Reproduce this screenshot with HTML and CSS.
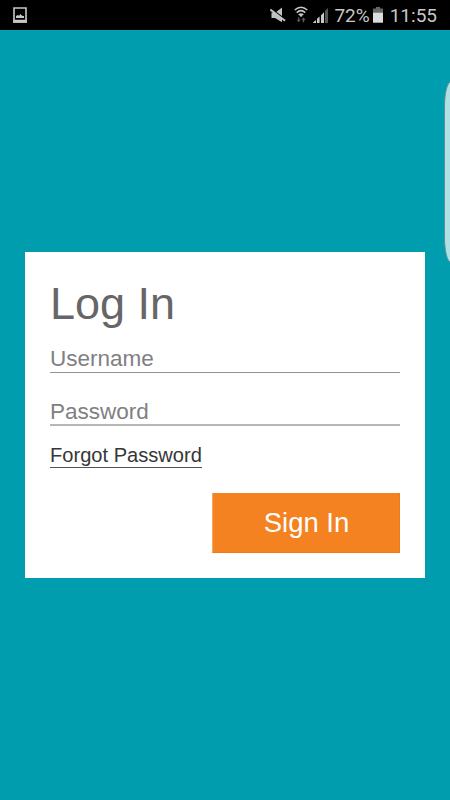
FILE: index.html
```html
<!DOCTYPE html>
<html lang="en">
  <head>
    <meta charset="UTF-8" />
    <meta name="viewport" content="width=device-width, initial-scale=1.0" />
    <title>Log In</title>
    <link rel="stylesheet" href="styles.css">
  </head>
  <body>
    <header class="status-bar">
      <svg class="icon-picture" width="14" height="16" viewBox="0 0 14 16">
        <path d="M1 1h12v14H1z" fill="none" stroke="#c8c8c8" stroke-width="1.6" />
        <path d="M.2 12.8h13.6v2.9H.2zM3 11V9l2-1 1 .7 1.5-1.7 1.5 1.7L11 9v2z" fill="#c8c8c8" />
      </svg>
      <div class="status-icons">
        <svg class="icon-mute" width="16" height="16" viewBox="0 0 16 16">
          <path d="M1.5 5.5h4L12 .5v14.8L5 11H1.5z" fill="#c0c0c0" />
          <path d="M0 1.2l16 11.8" stroke="#000" stroke-width="1.6" />
          <path d="M.3 2.5l14.7 11.3" stroke="#c4c4c4" stroke-width="2" />
        </svg>
        <svg class="icon-wifi" width="14" height="17" viewBox="0 0 14 17">
          <path d="M.7 4Q7-1.6 13.3 4M2.7 6.6Q7 2.7 11.3 6.6M4.7 9Q7 7 9.3 9" fill="none" stroke="#c8c8c8" stroke-width="1.5" />
          <circle cx="7" cy="9.6" r="1.2" fill="#c8c8c8" />
          <path d="M4 11.5h1.4v2.3h1.3L4.7 16.3l-2-2.5H4zM8.8 16.3V14H7.4l2.1-2.5 2.1 2.5h-1.4v2.3z" fill="#5c5c5c" />
        </svg>
        <svg class="icon-signal" width="15" height="15" viewBox="0 0 15 15">
          <path d="M0 15v-.5l3-2.5v3zM4 15v-4.2l2.6-2.4V15zM8 15V7.2l3-2.9V15z" fill="#c8c8c8" />
          <path d="M12 15V3l3-3v15z" fill="#555" />
        </svg>
        <span class="battery-level">72%</span>
        <svg class="icon-battery" width="10" height="16" viewBox="0 0 10 16">
          <path d="M0 1.5h3V0h4v1.5h3V6H0z" fill="#666" />
          <path d="M0 5.7h10v10H0z" fill="#dcdcdc" />
        </svg>
        <span class="clock">11:55</span>
      </div>
    </header>
    <div class="edge-handle"></div>
    <main class="container">
      <form class="login-form" id="loginForm">
        <h1>Log In</h1>
        <input type="text" id="username" placeholder="Username" />
        <input type="password" id="password" placeholder="Password" />
        <a class="forgot" href="#">Forgot Password</a>
        <input type="submit" value="Sign In" />
      </form>
    </main>
  </body>
</html>
```

FILE: styles.css
```css
* {
  box-sizing: border-box;
}

body {
  margin: 0;
  height: 100vh;
  display: flex;
  flex-direction: column;
  overflow: hidden;
  background-color: #009dae;
  font-family: "Liberation Sans", Arial, sans-serif;
}

.status-bar {
  display: flex;
  flex: none;
  justify-content: space-between;
  height: 30px;
  padding: 0 13px;
  background-color: #000;
  color: #c8c8c8;
  font-family: Roboto, sans-serif;
  font-size: 19px;
  line-height: 32px;
}

.status-icons {
  display: flex;
}

.icon-picture {
  margin-top: 7px;
}

.icon-mute {
  margin: 7px 8px 0 0;
}

.icon-wifi {
  margin: 6px 5px 0 0;
}

.icon-signal {
  margin: 8px 6px 0 0;
}

.icon-battery {
  margin: 7px 7px 0 3px;
}

.edge-handle {
  position: absolute;
  top: 81px;
  right: -1px;
  width: 7px;
  height: 182px;
  border: 1px solid #5e8f95;
  border-right: none;
  border-radius: 7px 0 0 7px / 26px 0 0 26px;
  background-color: #aee0e5;
}

.container {
  flex: 1;
  display: flex;
  align-items: center;
  padding: 0 25px;
}

.login-form {
  display: flex;
  flex-direction: column;
  width: 100%;
  height: 326px;
  padding: 26px 25px 25px;
  background-color: #fff;
}

h1 {
  margin: 0 0 13px;
  color: #666668;
  font-size: 45px;
  font-weight: normal;
  line-height: 52px;
}

input[type='text'],
input[type='password'] {
  width: 100%;
  height: 30px;
  margin: 0 0 23px;
  padding: 2px 0 0;
  border: none;
  border-bottom: 1px solid #929292;
  border-radius: 0;
  background: none;
  font-family: inherit;
  font-size: 22.5px;
}

input[type='password'] {
  margin-bottom: 17px;
  padding-top: 3px;
  border-bottom: 2px solid #b6b6b6;
}

input::placeholder {
  color: #808083;
}

.forgot {
  align-self: flex-start;
  height: 25px;
  border-bottom: 1px solid #55515f;
  color: #363636;
  font-size: 20.1px;
  line-height: 25px;
  text-decoration: none;
}

input[type='submit'] {
  align-self: flex-end;
  width: 188px;
  height: 60px;
  margin-top: auto;
  padding: 0 0 0 1px;
  border: 1px solid #f07a12;
  border-left-color: #f5a566;
  border-top: none;
  border-radius: 0;
  background-color: #f58220;
  color: #fff;
  font-family: inherit;
  font-size: 27.5px;
  cursor: pointer;
}
```
